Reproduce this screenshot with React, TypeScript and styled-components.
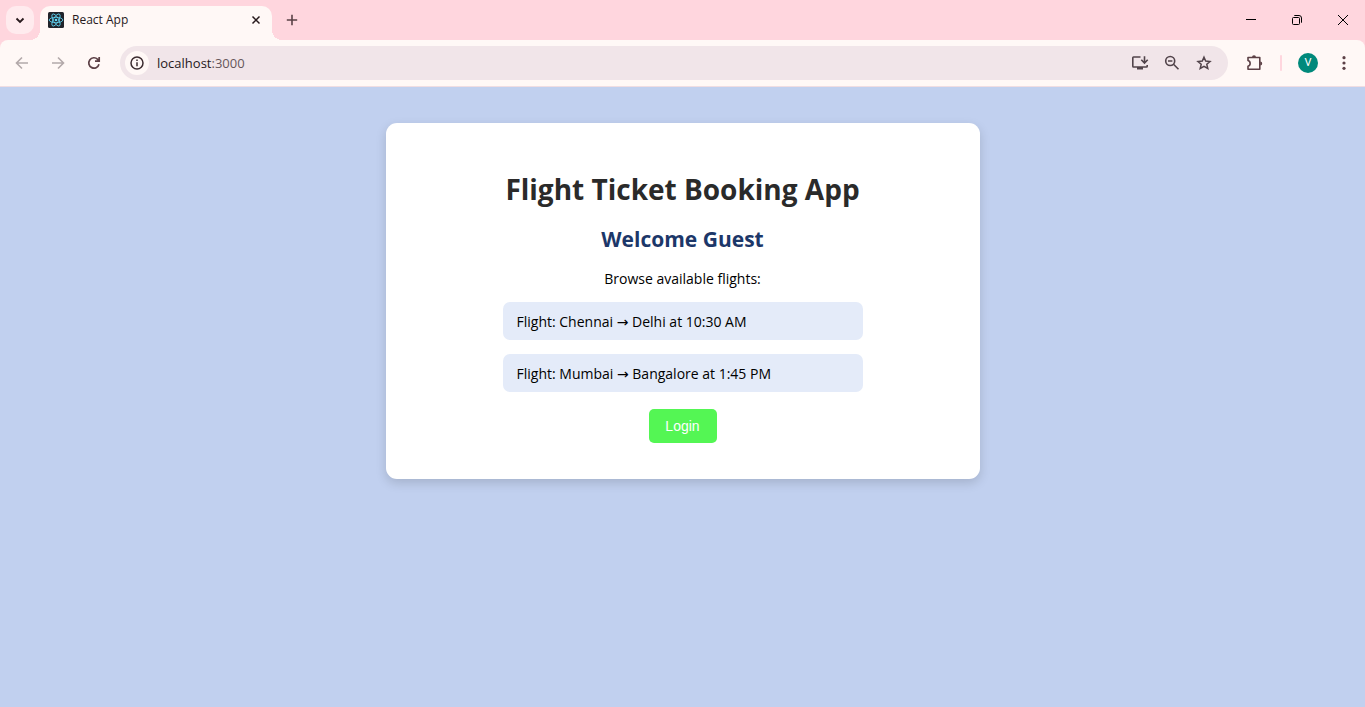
import React from "react";
import styled, { createGlobalStyle } from "styled-components";

const uiFont = `"Open Sans", "DejaVu Sans", sans-serif`;

const GlobalStyle = createGlobalStyle`
  * { box-sizing: border-box; }
  html, body, #root { height: 100%; }
  body { margin: 0; font-family: ${uiFont}; }
  button { font: inherit; border: 0; padding: 0; background: none; cursor: pointer; }
  svg { display: block; }
`;

const Window = styled.div`
  min-height: 100%;
  display: flex;
  flex-direction: column;
  background: #ffd6de;
`;

const TabStrip = styled.header`
  display: flex;
  height: 40px;
  padding-left: 6px;
`;

const TabSearch = styled.button`
  display: grid;
  place-items: center;
  width: 28px;
  height: 28px;
  margin: 6px 6px 0 0;
  border-radius: 10px;
  background: #ffebee;
`;

const Tab = styled.div`
  position: relative;
  display: flex;
  align-items: center;
  width: 232px;
  height: 34px;
  margin-top: 6px;
  padding: 0 8px 6px;
  border-radius: 10px 10px 0 0;
  background: #fff8f6;

  &::before,
  &::after {
    content: "";
    position: absolute;
    bottom: 0;
    width: 10px;
    height: 10px;
  }
  &::before {
    right: 100%;
    background: radial-gradient(circle at 0 0, transparent 10px, #fff8f6 10px);
  }
  &::after {
    left: 100%;
    background: radial-gradient(circle at 100% 0, transparent 10px, #fff8f6 10px);
  }
`;

const TabTitle = styled.span`
  flex: 1;
  margin-left: 8px;
  font-size: 12px;
  line-height: 18px;
  color: #27191c;
`;

const SmallButton = styled.button`
  display: grid;
  place-items: center;
  width: 16px;
  height: 16px;
`;

const NewTab = styled.button`
  display: grid;
  place-items: center;
  width: 28px;
  height: 28px;
  margin: 6px 0 0 6px;
`;

const WindowControls = styled.div`
  display: flex;
  margin-left: auto;
`;

const WindowButton = styled.button`
  display: grid;
  place-items: center;
  width: 46px;
  height: 40px;
`;

const Toolbar = styled.nav`
  display: flex;
  align-items: center;
  height: 47px;
  padding: 0 3px 0 4px;
  border-bottom: 1px solid #f0dde2;
  border-radius: 8px 8px 0 0;
  background: #fff8f6;
`;

const ToolButton = styled.button<{ $muted?: boolean }>`
  display: grid;
  place-items: center;
  width: 36px;
  height: 34px;
  color: ${(p) => (p.$muted ? "#b3a9aa" : "#5c4046")};
`;

const AddressBar = styled.div`
  flex: 1;
  display: flex;
  align-items: center;
  height: 34px;
  margin: 0 8px;
  padding: 0 8px 0 5px;
  border-radius: 17px;
  background: #f1e5e9;
`;

const SiteInfo = styled.button`
  display: grid;
  place-items: center;
  width: 24px;
  height: 24px;
  border-radius: 50%;
  background: #fff8f6;
`;

const Address = styled.div`
  flex: 1;
  margin-left: 8px;
  font-size: 13px;
  line-height: 20px;
  color: #27191c;

  span { color: #66565a; }
`;

const AddressAction = styled.button`
  display: grid;
  place-items: center;
  width: 32px;
  height: 32px;
  color: #51434a;
`;

const Divider = styled.span`
  width: 2px;
  height: 16px;
  margin: 0 8px;
  border-radius: 1px;
  background: #ffd6de;
`;

const Avatar = styled.span`
  display: grid;
  place-items: center;
  width: 20px;
  height: 20px;
  border-radius: 50%;
  background: #00897b;
  color: #fff;
  font-family: Roboto, sans-serif;
  font-size: 11px;
  line-height: 20px;
`;

const Page = styled.main`
  flex: 1;
  padding: 36px 16px;
  background: #c1d0ef;
`;

const Card = styled.section`
  display: flex;
  flex-direction: column;
  align-items: center;
  max-width: 594px;
  margin: 0 auto;
  padding: 46px 36px 36px;
  border-radius: 11px;
  background: #fff;
  box-shadow: 0 4px 11px rgba(0, 0, 0, 0.15);
`;

const Title = styled.h1`
  margin: 0;
  font-size: 28px;
  line-height: 40px;
  color: #2a2a2a;
`;

const Greeting = styled.h2`
  margin: 15px 0 0;
  font-size: 21px;
  line-height: 30px;
  color: #1c3769;
`;

const Lead = styled.p`
  margin: 15px 0 0;
  font-size: 14px;
  line-height: 20px;
  color: #000;
`;

const FlightList = styled.ul`
  display: flex;
  flex-direction: column;
  gap: 14px;
  width: 100%;
  max-width: 360px;
  margin: 13px 0 0;
  padding: 0;
  list-style: none;
`;

const Flight = styled.li`
  padding: 10px 14px 8px;
  border-radius: 7px;
  background: #e4ebf9;
  font-size: 14px;
  line-height: 20px;
  color: #000;
`;

const LoginButton = styled.button`
  min-width: 68px;
  height: 34px;
  margin-top: 17px;
  padding: 0 16px;
  border-radius: 5px;
  background: #54f654;
  color: #fff;
  font-family: "Liberation Sans", Arial, sans-serif;
  font-size: 14px;
  line-height: 20px;
`;

const ReactLogo = () => (
  <svg width="16" height="16" viewBox="0 0 16 16" aria-hidden="true">
    <rect width="16" height="16" rx="1.5" fill="#20232a" />
    <g fill="none" stroke="#61dafb" strokeWidth="0.8">
      <ellipse cx="8" cy="8" rx="6.8" ry="2.7" />
      <ellipse cx="8" cy="8" rx="6.8" ry="2.7" transform="rotate(60 8 8)" />
      <ellipse cx="8" cy="8" rx="6.8" ry="2.7" transform="rotate(120 8 8)" />
    </g>
    <circle cx="8" cy="8" r="1.3" fill="#61dafb" />
  </svg>
);

type IconProps = { d: string; size?: number; width?: number; color?: string };

const LineIcon = ({ d, size = 16, width = 1.5, color = "currentColor" }: IconProps) => (
  <svg width={size} height={size} viewBox={`0 0 ${size} ${size}`} fill="none" stroke={color} strokeWidth={width} aria-hidden="true">
    <path d={d} />
  </svg>
);

const flights = ["Flight: Chennai → Delhi at 10:30 AM", "Flight: Mumbai → Bangalore at 1:45 PM"];

export default function App() {
  return (
    <Window>
      <GlobalStyle />
      <TabStrip>
        <TabSearch aria-label="Search tabs">
          <LineIcon d="M4.5 6.5 8 10l3.5-3.5" width={1.8} color="#27191c" />
        </TabSearch>
        <Tab>
          <ReactLogo />
          <TabTitle>React App</TabTitle>
          <SmallButton aria-label="Close tab">
            <LineIcon d="M4.5 4.5l7 7M11.5 4.5l-7 7" width={1.5} color="#27191c" />
          </SmallButton>
        </Tab>
        <NewTab aria-label="New tab">
          <LineIcon d="M8 2.8v10.4M2.8 8h10.4" width={1.6} color="#5a4146" />
        </NewTab>
        <WindowControls>
          <WindowButton aria-label="Minimize">
            <LineIcon d="M4 7.5h10" width={1} color="#000" />
          </WindowButton>
          <WindowButton aria-label="Restore">
            <LineIcon d="M5.5 5.5h5a1 1 0 0 1 1 1v5a1 1 0 0 1-1 1h-5a1 1 0 0 1-1-1v-5a1 1 0 0 1 1-1zM6.300 3.500h4.700a2.500 2.500 0 0 1 2.500 2.500v4.700" width={1} color="#000" />
          </WindowButton>
          <WindowButton aria-label="Close">
            <LineIcon d="M4 3l10 10M14 3L4 13" width={1} color="#000" />
          </WindowButton>
        </WindowControls>
      </TabStrip>

      <Toolbar aria-label="Browser toolbar">
        <ToolButton $muted aria-label="Back">
          <LineIcon d="M14 8H3M8 2.5L2.5 8 8 13.5" width={1.6} />
        </ToolButton>
        <ToolButton $muted aria-label="Forward">
          <LineIcon d="M2 8h11M8 2.5L13.5 8 8 13.5" width={1.6} />
        </ToolButton>
        <ToolButton aria-label="Reload">
          <LineIcon d="M13 9.3A5.2 5.2 0 1 1 11.7 4.3L13.2 5.8M13.2 2v4.2H9" width={1.7} />
        </ToolButton>
        <AddressBar>
          <SiteInfo aria-label="Site information">
            <svg width="14" height="14" viewBox="0 0 14 14" fill="none" stroke="#3b2b2f" strokeWidth="1.5" aria-hidden="true">
              <circle cx="7" cy="7" r="6" />
              <path d="M7 6.3v4M7 3.5v1.5" />
            </svg>
          </SiteInfo>
          <Address>
            localhost<span>:3000</span>
          </Address>
          <AddressAction aria-label="Install app">
            <svg width="18" height="16" viewBox="0 0 18 16" fill="none" stroke="currentColor" strokeWidth="1.6" aria-hidden="true">
              <path d="M9.5 2H2.5Q1.8 2 1.8 2.7V11.3Q1.8 12 2.5 12H15.5Q16.2 12 16.2 11.3V10M13.5 1.2V7.5M10.3 4.8L13.5 8L16.7 4.8" />
              <path d="M6 12h6v2.5H6z" fill="currentColor" stroke="none" />
            </svg>
          </AddressAction>
          <AddressAction aria-label="Zoom">
            <svg width="16" height="16" viewBox="0 0 16 16" fill="none" stroke="currentColor" strokeWidth="1.6" aria-hidden="true">
              <circle cx="6.2" cy="6" r="4.5" />
              <path d="M9.5 9.3L14.5 14.3M4 6h4.4" />
            </svg>
          </AddressAction>
          <AddressAction aria-label="Bookmark this tab">
            <LineIcon d="M8 2.2L9.7 6.1L14 6.5L10.8 9.3L11.8 13.5L8 11.3L4.2 13.5L5.2 9.3L2 6.5L6.3 6.1Z" width={1.5} />
          </AddressAction>
        </AddressBar>
        <ToolButton aria-label="Extensions">
          <svg width="18" height="18" viewBox="0 0 18 18" aria-hidden="true">
            <path d="M3 3.5H14.8V15.3H3V12.2A2.9 2.9 0 0 0 3 6.6Z" fill="none" stroke="currentColor" strokeWidth="1.6" strokeLinejoin="round" />
            <path d="M7 3.2a2 2 0 0 1 4 0zM15.2 7.5a2 2 0 0 1 0 4z" fill="currentColor" />
          </svg>
        </ToolButton>
        <Divider />
        <ToolButton aria-label="Profile">
          <Avatar>V</Avatar>
        </ToolButton>
        <ToolButton aria-label="Menu">
          <svg width="16" height="16" viewBox="0 0 16 16" fill="currentColor" aria-hidden="true">
            <circle cx="8" cy="2.7" r="1.6" />
            <circle cx="8" cy="8" r="1.6" />
            <circle cx="8" cy="13.3" r="1.6" />
          </svg>
        </ToolButton>
      </Toolbar>

      <Page>
        <Card>
          <Title>Flight Ticket Booking App</Title>
          <Greeting>Welcome Guest</Greeting>
          <Lead>Browse available flights:</Lead>
          <FlightList>
            {flights.map((flight) => (
              <Flight key={flight}>{flight}</Flight>
            ))}
          </FlightList>
          <LoginButton>Login</LoginButton>
        </Card>
      </Page>
    </Window>
  );
}
